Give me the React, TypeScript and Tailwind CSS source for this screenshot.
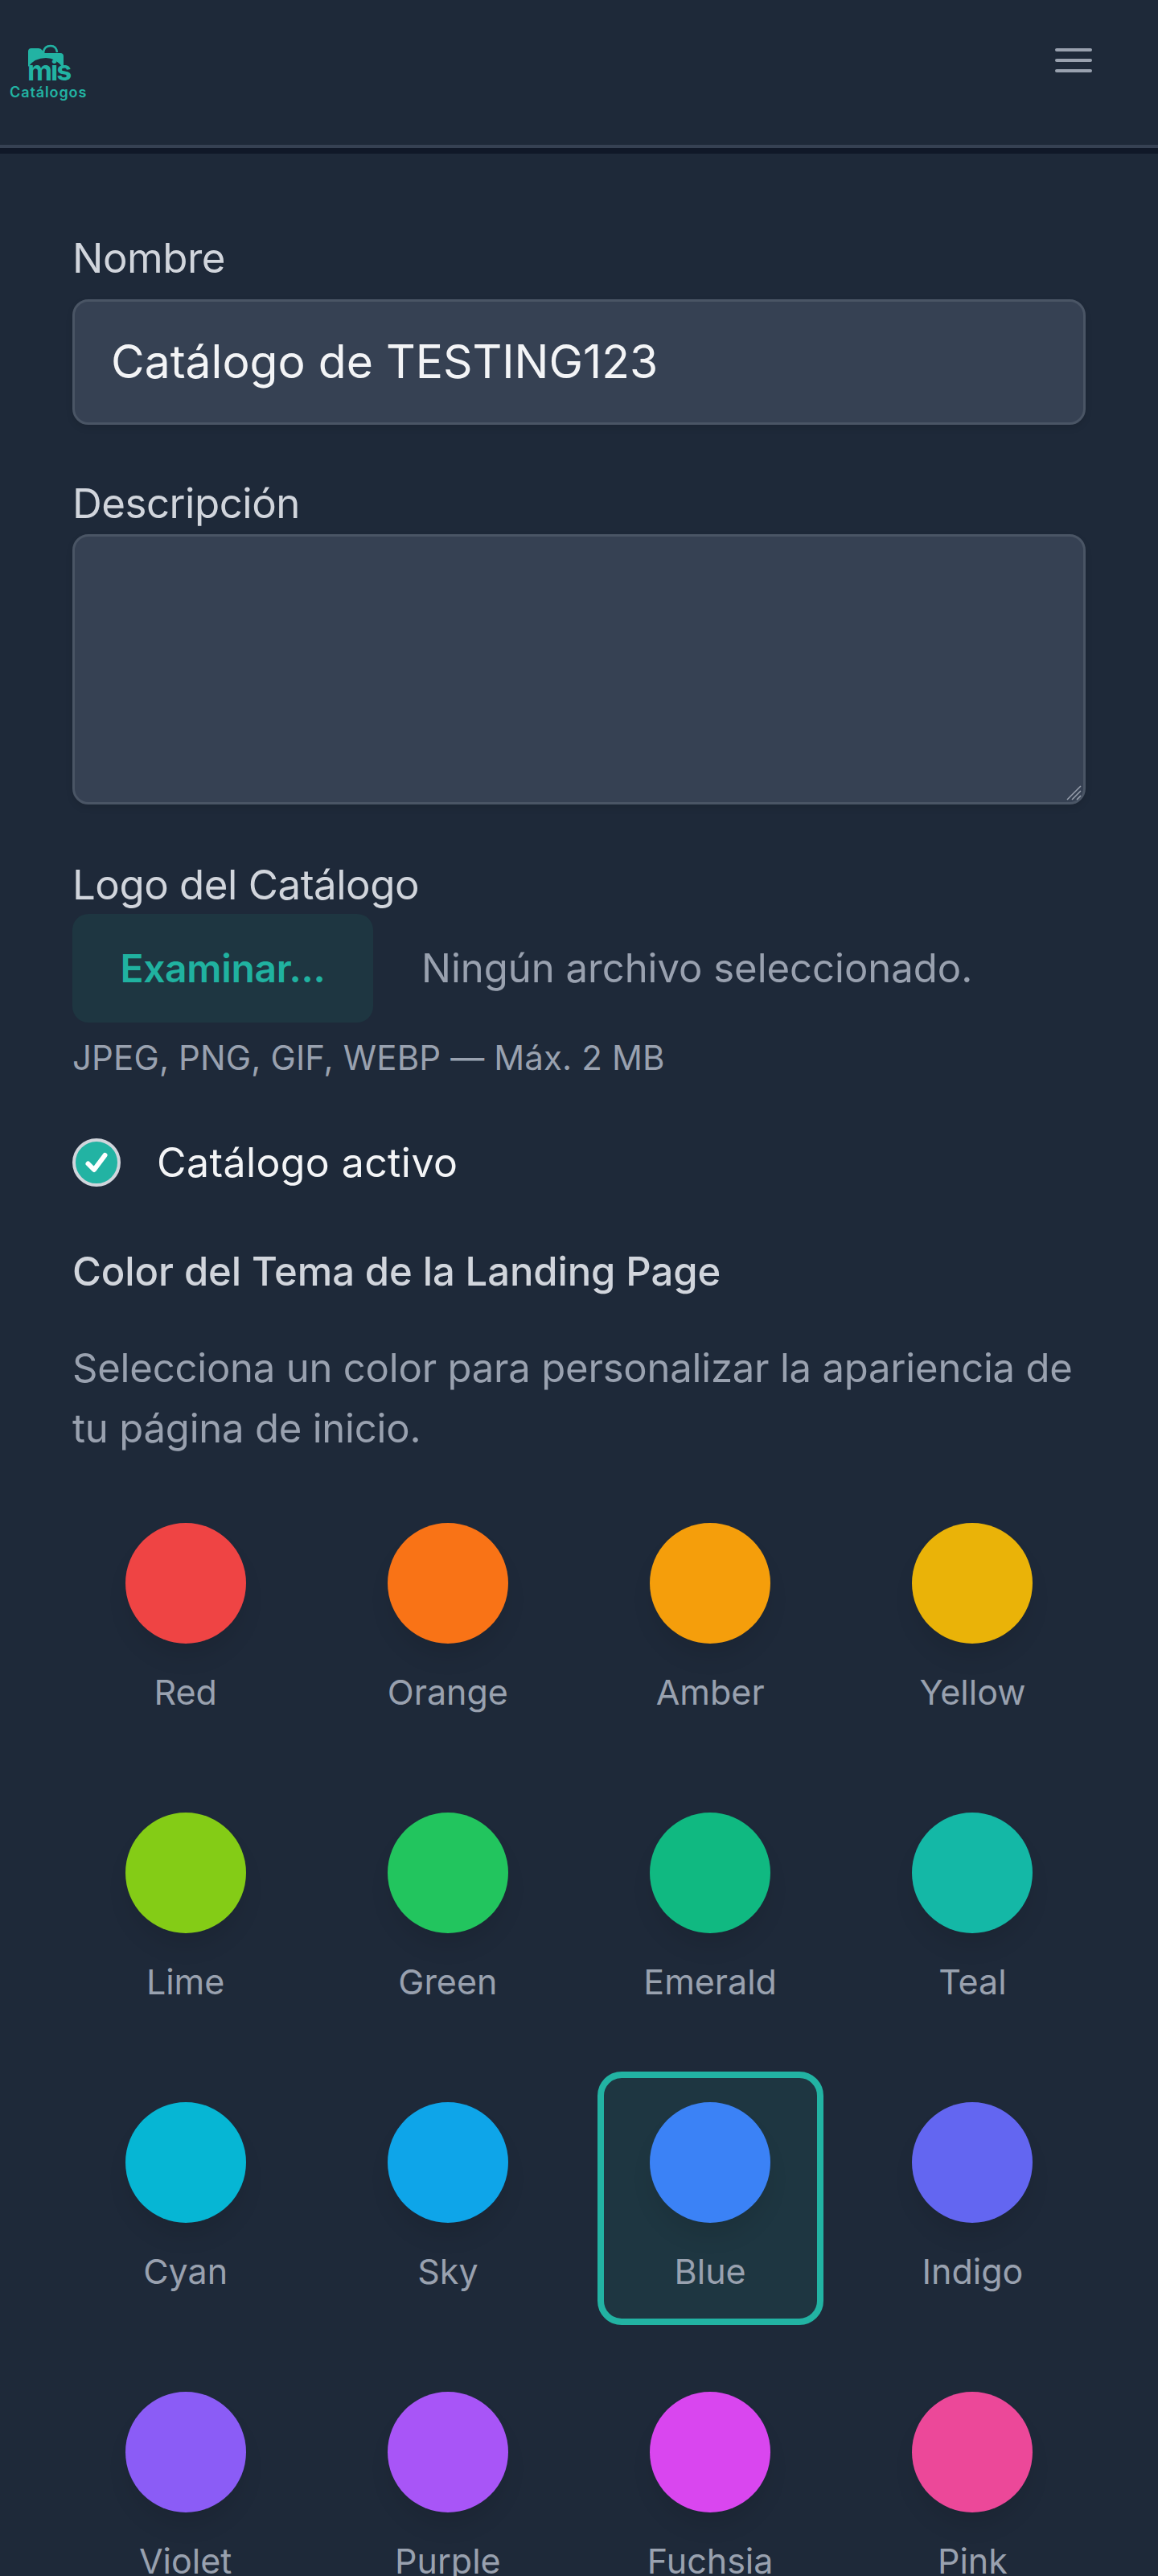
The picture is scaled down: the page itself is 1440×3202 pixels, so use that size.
const colors = [
  { name: 'Red', swatch: 'bg-[#ef4444]' },
  { name: 'Orange', swatch: 'bg-[#f97316]' },
  { name: 'Amber', swatch: 'bg-[#f59e0b]' },
  { name: 'Yellow', swatch: 'bg-[#eab308]' },
  { name: 'Lime', swatch: 'bg-[#84cc16]' },
  { name: 'Green', swatch: 'bg-[#22c55e]' },
  { name: 'Emerald', swatch: 'bg-[#10b981]' },
  { name: 'Teal', swatch: 'bg-[#14b8a6]' },
  { name: 'Cyan', swatch: 'bg-[#06b6d4]' },
  { name: 'Sky', swatch: 'bg-[#0ea5e9]' },
  { name: 'Blue', swatch: 'bg-[#3b82f6]', selected: true },
  { name: 'Indigo', swatch: 'bg-[#6366f1]' },
  { name: 'Violet', swatch: 'bg-[#8b5cf6]' },
  { name: 'Purple', swatch: 'bg-[#a855f7]' },
  { name: 'Fuchsia', swatch: 'bg-[#d946ef]' },
  { name: 'Pink', swatch: 'bg-[#ec4899]' },
];

function Logo() {
  return (
    <div className="relative w-[110px] h-[124px]">
      <svg viewBox="30 54 60 50" className="absolute left-[30px] top-[54px] w-[60px] h-[50px]">
        <path d="M35 64 Q35 60 39 60 H48 Q51 60 53 63 L56 66 H75 Q79 66 79 70 V85 Q70 72 57 72 Q43 72 35 83 Z" fill="#22b3a3" />
        <path d="M54 65 Q55 57 63 57 Q70 57 71 65" fill="none" stroke="#22b3a3" strokeWidth="2.5" />
      </svg>
      <div className="absolute left-[34px] top-[71px] text-[34px] leading-[34px] font-bold tracking-[-2px] text-[#22b3a3]">mis</div>
      <div className="absolute left-[12px] top-[105px] text-[18px] leading-[20px] font-semibold tracking-[0.9px] text-[#22b3a3]">Catálogos</div>
    </div>
  );
}

export default function App() {
  return (
    <div className="h-[3202px] overflow-hidden bg-gray-800 font-['Inter',sans-serif]">
      <header className="h-[191px] border-b-[7px] border-gray-900 shadow-[inset_0_-4px_0_#364153] flex justify-between items-start">
        <Logo />
        <button className="mt-[60px] mr-[82px] w-[46px] h-[30px] flex flex-col justify-between">
          <span className="block h-[4px] rounded-full bg-gray-400" />
          <span className="block h-[4px] rounded-full bg-gray-400" />
          <span className="block h-[4px] rounded-full bg-gray-400" />
        </button>
      </header>

      <main className="px-[90px]">
        <label className="block mt-[94px] text-[51px] leading-[72px] tracking-[-0.5px] text-gray-300">Nombre</label>
        <div className="mt-[15px] h-[156px] rounded-[20px] border-[3px] border-gray-600 bg-gray-700 shadow-[0_4px_8px_rgb(0_0_0/0.1)] flex items-center px-[45px] text-[57px] text-gray-100">
          Catálogo de TESTING123
        </div>

        <label className="block mt-[62px] text-[51px] leading-[72px] tracking-[-0.5px] text-gray-300">Descripción</label>
        <div className="relative mt-[2px] h-[336px] rounded-[20px] border-[3px] border-gray-600 bg-gray-700 shadow-[0_4px_8px_rgb(0_0_0/0.1)]">
          <svg viewBox="0 0 20 20" className="absolute right-[2px] bottom-[2px] w-[20px] h-[20px]">
            <path d="M2 19 L19 2 M8 19 L19 8 M14 19 L19 14" stroke="#99a1af" strokeWidth="1.5" />
          </svg>
        </div>

        <label className="block mt-[64px] text-[51px] leading-[72px] tracking-[-0.5px] text-gray-300">Logo del Catálogo</label>
        <div className="flex items-center">
          <div className="w-[374px] h-[135px] rounded-[20px] bg-[#1e3641] flex items-center justify-center text-[48px] font-semibold tracking-[-0.3px] text-[#20b2a0]">Examinar...</div>
          <span className="ml-[60px] text-[49px] text-gray-400">Ningún archivo seleccionado.</span>
        </div>
        <p className="mt-[14px] text-[42px] leading-[60px] tracking-[0.13px] text-gray-400">JPEG, PNG, GIF, WEBP — Máx. 2 MB</p>

        <div className="mt-[70px] flex items-center h-[60px]">
          <span className="w-[60px] h-[60px] rounded-full border-[4px] border-gray-300 bg-[#22b3a3] flex items-center justify-center">
            <svg viewBox="0 0 24 24" className="w-[36px] h-[36px]" fill="none" stroke="#fff" strokeWidth="4" strokeLinecap="round" strokeLinejoin="round">
              <path d="M5 13 l5 5 L19 6" />
            </svg>
          </span>
          <span className="ml-[45px] text-[50px] tracking-[0.4px] text-gray-100">Catálogo activo</span>
        </div>

        <h3 className="mt-[70px] text-[49px] leading-[72px] font-medium tracking-[-0.1px] text-gray-300">Color del Tema de la Landing Page</h3>
        <p className="mt-[46px] text-[49px] leading-[75px] tracking-[-0.2px] text-gray-400">
          Selecciona un color para personalizar la apariencia de tu página de inicio.
        </p>

        <div className="mt-[42px] grid grid-cols-4 gap-[45px]">
          {colors.map((c) => (
            <div
              key={c.name}
              className={`h-[315px] rounded-[30px] border-[8px] flex flex-col items-center pt-[30px] ${c.selected ? 'border-[#22b3a3] bg-[#1e3641]' : 'border-transparent'}`}
            >
              <div className={`w-[150px] h-[150px] rounded-full shadow-[0_20px_30px_-6px_rgb(0_0_0/0.1)] ${c.swatch}`} />
              <span className="mt-[30px] text-[43px] leading-[60px] text-gray-400">{c.name}</span>
            </div>
          ))}
        </div>
      </main>
    </div>
  );
}
